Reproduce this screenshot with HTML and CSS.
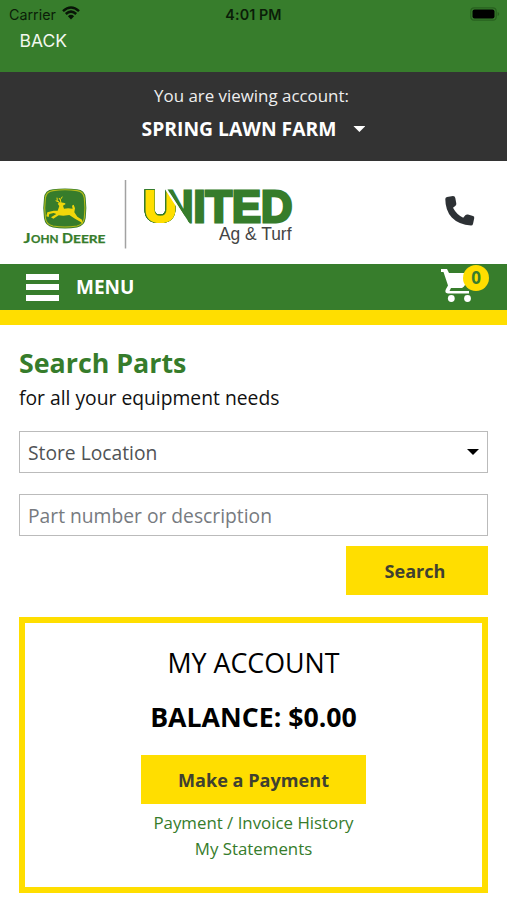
FILE: index.html
```html
<!DOCTYPE html>
<html lang="en">
<head>
<meta charset="utf-8">
<meta name="viewport" content="width=device-width, initial-scale=1">
<title>United Ag &amp; Turf</title>
<link rel="stylesheet" href="styles.css">
</head>
<body>
<div class="app-bar">
  <div class="status">
    <div class="carrier"><span>Carrier</span>
      <svg class="wifi" viewBox="0 0 18 14"><path d="M1 5.2Q9-2.2 17 5.2M3.8 8Q9 3.2 14.2 8" fill="none" stroke="#081507" stroke-width="2.5"/><path d="M5.9 10.2Q9 7.5 12.1 10.2L9 13.5Z" fill="#081507"/></svg>
    </div>
    <span class="time">4:01 PM</span>
    <svg class="battery" viewBox="0 0 30 14"><rect x=".8" y=".8" width="25.4" height="12.4" rx="3.5" fill="none" stroke="#28611f" stroke-width="1.2"/><rect x="2.5" y="2.5" width="22" height="9" rx="2" fill="#000"/><path d="M27.6 5v4q1.6-.5 1.6-2t-1.6-2" fill="#28611f"/></svg>
  </div>
  <a class="back">BACK</a>
</div>
<div class="account-bar">
  <div class="viewing">You are viewing account:</div>
  <div class="account-name"><span>SPRING LAWN FARM</span><i class="caret"></i></div>
</div>
<header class="brand">
  <svg class="logos" viewBox="20 175 280 75">
    <defs>
      <clipPath id="u-side"><path d="M140 180H160L164.500 188.500 179 211V230H140Z"/></clipPath>
      <clipPath id="n-side"><path d="M167 180V188.500L190 224V230H300V180Z"/></clipPath>
    </defs>
    <path d="M53 189.200Q65 187.600 77 189.200Q85 190 85.700 198Q87 208 85.700 218Q84.700 226 77 227.500Q65 229.600 53 227.500Q45 226 44 218Q42.500 208 44 198Q44.700 190 53 189.200Z" fill="#367c2b"/>
    <path d="M53 190.600Q65 188.900 77 190.600Q83.700 191.500 84.300 198Q85.600 208 84.300 218Q83.500 224.400 77 226Q65 228 53 226Q46.200 224.500 45.400 218Q44 208 45.400 198Q46 191.600 53 190.600Z" fill="#367c2b" stroke="#b5bd1c" stroke-width="1.100"/>
    <g transform="translate(10 170) scale(.33333)">
      <path d="M143 101L150 97 164 99 167 102 159 107 162 116Q174 113 188 116L186 107 191 104 195 115 193 127 202 140 216 149 219 161 211 155 195 146 178 135 160 137 146 136 130 146 123 142 139 132 131 129 118 132 116 141 109 139 112 127 131 122 143 122 148 108Z" fill="#f0d70a"/>
      <path d="M151 101L142 92 141 83M147 96L137 92M153 99L151 89 157 80M151 90L147 84" fill="none" stroke="#f0d70a" stroke-width="3"/>
    </g>
    <g class="deere"><text x="23.500" y="243" font-size="12.800" textLength="7" lengthAdjust="spacingAndGlyphs">J</text><text x="31" y="243" font-size="10.800" textLength="27.500" lengthAdjust="spacingAndGlyphs">OHN</text><text x="62" y="243" font-size="12.800" textLength="11" lengthAdjust="spacingAndGlyphs">D</text><text x="73" y="243" font-size="10.800" textLength="32.500" lengthAdjust="spacingAndGlyphs">EERE</text></g>
    <path d="M125.500 180V248.500" stroke="#a2a2a2" stroke-width="1.500"/>
    <g class="united">
      <g clip-path="url(#u-side)"><text class="u" x="144" y="222" font-size="44" textLength="33" lengthAdjust="spacingAndGlyphs">U</text></g>
      <g clip-path="url(#n-side)"><text x="162" y="221.800" font-size="44" textLength="130.500" lengthAdjust="spacingAndGlyphs">NITED</text></g>
    </g>
    <text class="turf" x="219" y="239.500" font-size="18.500" textLength="72.500" lengthAdjust="spacingAndGlyphs">Ag &amp; Turf</text>
  </svg>
  <svg class="phone" viewBox="0 0 30 30"><path d="M2 1L8 0Q10 0 10.300 2L11.300 7.500Q11.500 9 10.200 10L8 11.700Q11.400 18.300 18.200 21.800L20.300 19.300Q21.400 18.100 23 18.500L28 20Q29.700 20.600 29.200 22.300L28 28Q27.600 29.500 26 29.500Q14 29 6.800 21.600Q.3 14.500 .3 3Q.3 1.500 2 1Z" fill="#2d3135"/></svg>
</header>
<nav class="nav">
  <div class="burger"><i></i><i></i><i></i></div>
  <span class="menu">MENU</span>
  <div class="cart">
    <svg viewBox="0 0 34 34"><path d="M0 0H6L8 4H29L24 16Q23 18 21 19H10L8.500 22H28V24.500H7Q3 24 5 20L7 16.500 2.500 3H0Z" fill="#fff"/><circle cx="10.300" cy="29.500" r="3.400" fill="#fff"/><circle cx="26.500" cy="29.500" r="3.400" fill="#fff"/></svg>
    <span class="badge">0</span>
  </div>
</nav>
<main>
  <h1>Search Parts</h1>
  <p class="sub">for all your equipment needs</p>
  <div class="field select"><span>Store Location</span><i class="caret"></i></div>
  <div class="field placeholder"><span>Part number or description</span></div>
  <a class="button search"><span>Search</span></a>
  <section class="account">
    <h2>MY ACCOUNT</h2>
    <h3>BALANCE: $0.00</h3>
    <a class="button pay"><span>Make a Payment</span></a>
    <a class="link history">Payment / Invoice History</a>
    <a class="link">My Statements</a>
  </section>
</main>
</body>
</html>
```
FILE: styles.css
```css
* { box-sizing: border-box; }
body { margin: 0; background: #fff; font-family: "Open Sans", "Noto Sans", sans-serif; color: #111; height: 900px; overflow: hidden; }
h1, h2, h3, p { margin: 0; }
svg, i { display: block; flex-shrink: 0; }
.app-bar { height: 72px; background: #377d2c; font-family: Inter, sans-serif; }
.status { height: 28px; padding: 0 7px 0 9px; display: grid; grid-template-columns: 1fr auto 1fr; align-items: center; color: #0b1d08; font-size: 14.300px; }
.carrier { display: flex; align-items: center; gap: 6px; }
.wifi { width: 18px; height: 14px; margin-top: -2px; }
.time { font-weight: 600; margin-right: 2px; letter-spacing: .1px; }
.battery { width: 30px; height: 14px; justify-self: end; margin-top: -1px; }
.back { display: block; padding-left: 19.500px; color: #f2f8ef; font-size: 17.500px; line-height: 26px; }
.account-bar { height: 89px; padding-top: 11px; background: #333; color: #fff; text-align: center; }
.viewing { font-size: 16.900px; line-height: 26px; margin-right: 4px; color: #eee; }
.account-name { display: flex; justify-content: center; align-items: center; gap: 17px; font-size: 19.300px; font-weight: 700; line-height: 26px; margin-top: 7px; }
.caret { width: 12px; height: 6px; background: currentColor; clip-path: polygon(0 0, 100% 0, 50% 100%); }
.brand { height: 103px; display: flex; justify-content: space-between; align-items: flex-start; padding: 14px 32px 0 20px; }
.logos { width: 280px; height: 75px; overflow: visible; }
.deere { fill: #367c2b; font-family: Lato, sans-serif; font-weight: 700; stroke: #367c2b; stroke-width: .25; }
.united { fill: #367c2b; font-family: "Liberation Sans", sans-serif; font-weight: 700; stroke: #367c2b; stroke-width: 2.800; }
.u { fill: #ffde00; stroke: #ffde00; stroke-width: 2.200; filter: drop-shadow(.6px 0 0 #367c2b) drop-shadow(-.6px 0 0 #367c2b) drop-shadow(0 .6px 0 #367c2b) drop-shadow(0 -.6px 0 #367c2b); }
.turf { fill: #444; font-family: "Liberation Sans", sans-serif; }
.phone { width: 30px; height: 30px; margin-top: 21px; }
.nav { height: 61px; background: #377d2c; border-bottom: 15px solid #ffde00; display: flex; align-items: center; padding: 0 18px 0 26px; }
.burger { width: 33px; height: 27px; display: flex; flex-direction: column; justify-content: space-between; }
.burger i { height: 6px; background: #fff; }
.menu { font-size: 19px; font-weight: 700; color: #fff; margin-left: 17px; }
.cart { position: relative; width: 48px; height: 36px; margin-left: auto; }
.cart svg { width: 34px; height: 34px; margin-top: 0; }
.badge { position: absolute; right: 0; top: -4px; width: 26px; height: 26px; border-radius: 50%; background: #ffde00; color: #377d2c; font-size: 17px; font-weight: 700; line-height: 26px; text-align: center; }
main { padding: 20px 19px 0; }
h1 { color: #367c2b; font-size: 26.800px; line-height: 36px; }
.sub { font-size: 19.300px; line-height: 28px; margin-top: 3px; }
.field { height: 42px; border: 1px solid #bbb; display: flex; align-items: center; padding: 0 8px; font-size: 19.250px; color: #505356; }
.select { margin-top: 19px; justify-content: space-between; }
.select .caret { color: #000; }
.placeholder { margin-top: 21px; color: #777b7f; }
.button { display: flex; align-items: center; justify-content: center; height: 49px; background: #ffde00; color: #3f4130; font-weight: 700; font-size: 18.100px; }
.search { width: 142px; margin: 10px 0 0 auto; padding-right: 4px; }
.account { margin-top: 22px; height: 276px; border: 6px solid #ffde00; padding-top: 22px; display: flex; flex-direction: column; align-items: center; color: #000; }
h2 { font-size: 26.800px; font-weight: 400; line-height: 36px; }
h3 { font-size: 26.700px; line-height: 36px; margin-top: 18px; }
.pay { width: 225px; margin-top: 20px; }
.link { color: #367c2b; font-size: 16.850px; line-height: 26px; }
.history { margin-top: 6px; }
```
